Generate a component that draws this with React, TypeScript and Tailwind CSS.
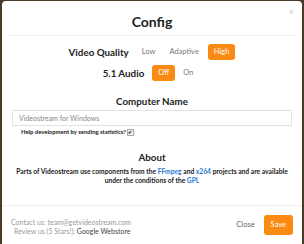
import React from "react";

const App: React.FC = () => {
	return (
		<div className="h-[244px] w-[304px] overflow-hidden bg-[#4a3a2c] pl-[2px] pr-[2px] pt-[1px] font-['Lato','Liberation_Sans',sans-serif]">
			<div className="relative flex h-[243px] flex-col rounded-t-[4px] bg-white text-[#333]">
				<span className="absolute right-[8px] top-[6px] text-[9px] leading-none text-[#c8c8c8]">×</span>
				<div className="mx-[8px] flex h-[35px] items-center justify-center border-b border-[#efefef] pt-[7px]">
					<h1 className="text-[14px] font-bold leading-none text-[#222]">Config</h1>
				</div>
				<div className="mt-[8px] flex h-[16px] items-center justify-center">
					<span className="text-[9.8px] font-bold text-[#222]">Video Quality</span>
					<span className="ml-[13px] text-[7.5px] text-[#777]">Low</span>
					<span className="ml-[14px] text-[7.5px] text-[#777]">Adaptive</span>
					<span className="ml-[9px] flex h-[16px] items-center rounded-[3px] bg-[#fb8a12] px-[6px] text-[7.5px] text-white">High</span>
				</div>
				<div className="mt-[5px] flex h-[16px] items-center justify-center pr-[8px]">
					<span className="text-[9.8px] font-bold text-[#222]">5.1 Audio</span>
					<span className="ml-[8px] flex h-[16px] items-center rounded-[3px] bg-[#fb8a12] px-[6px] text-[7.5px] text-white">Off</span>
					<span className="ml-[8px] text-[7.5px] text-[#777]">On</span>
				</div>
				<h2 className="mt-[14px] flex h-[12px] items-center justify-center text-[9.8px] font-bold text-[#222]">Computer Name</h2>
				<div className="mx-[10px] mt-[3px] flex h-[16px] items-center border border-[#e2e2e2] px-[6px] text-[7px] text-[#888]">
					Videostream for Windows
				</div>
				<div className="ml-[19px] mt-[2px] flex h-[8px] items-center text-[5.9px] font-bold text-[#222]">
					Help development by sending statistics?
					<span className="ml-[1px] flex h-[7px] w-[7px] items-center justify-center border border-[#aaa] bg-[#eee] text-[5px] leading-none">✔</span>
				</div>
				<h2 className="mt-[15px] flex h-[12px] items-center justify-center text-[9.8px] font-bold text-[#222]">About</h2>
				<p className="mt-[4px] whitespace-nowrap text-center text-[6.7px] font-bold leading-[9px] text-[#222]">
					Parts of Videostream use components from the <span className="text-[#2a7bd0]">FFmpeg</span> and{" "}
					<span className="text-[#2a7bd0]">x264</span> projects and are available
					<br />
					under the conditions of the <span className="text-[#2a7bd0]">GPL</span>
				</p>
				<div className="mt-auto flex h-[39px] items-center border-t border-[#eee] pl-[9px] pr-[9px]">
					<div className="pt-[3px] text-[7px] leading-[9px] text-[#999]">
						<div>Contact us: team@getvideostream.com</div>
						<div className="pl-[3px]">
							Review us (5 Stars!): <span className="text-[#444]">Google Webstore</span>
						</div>
					</div>
					<span className="ml-auto mr-[9px] text-[7.5px] text-[#666]">Close</span>
					<span className="flex h-[20px] items-center rounded-[3px] bg-[#fb8a12] px-[7px] text-[7.5px] text-white">Save</span>
				</div>
			</div>
		</div>
	);
};

export default App;
